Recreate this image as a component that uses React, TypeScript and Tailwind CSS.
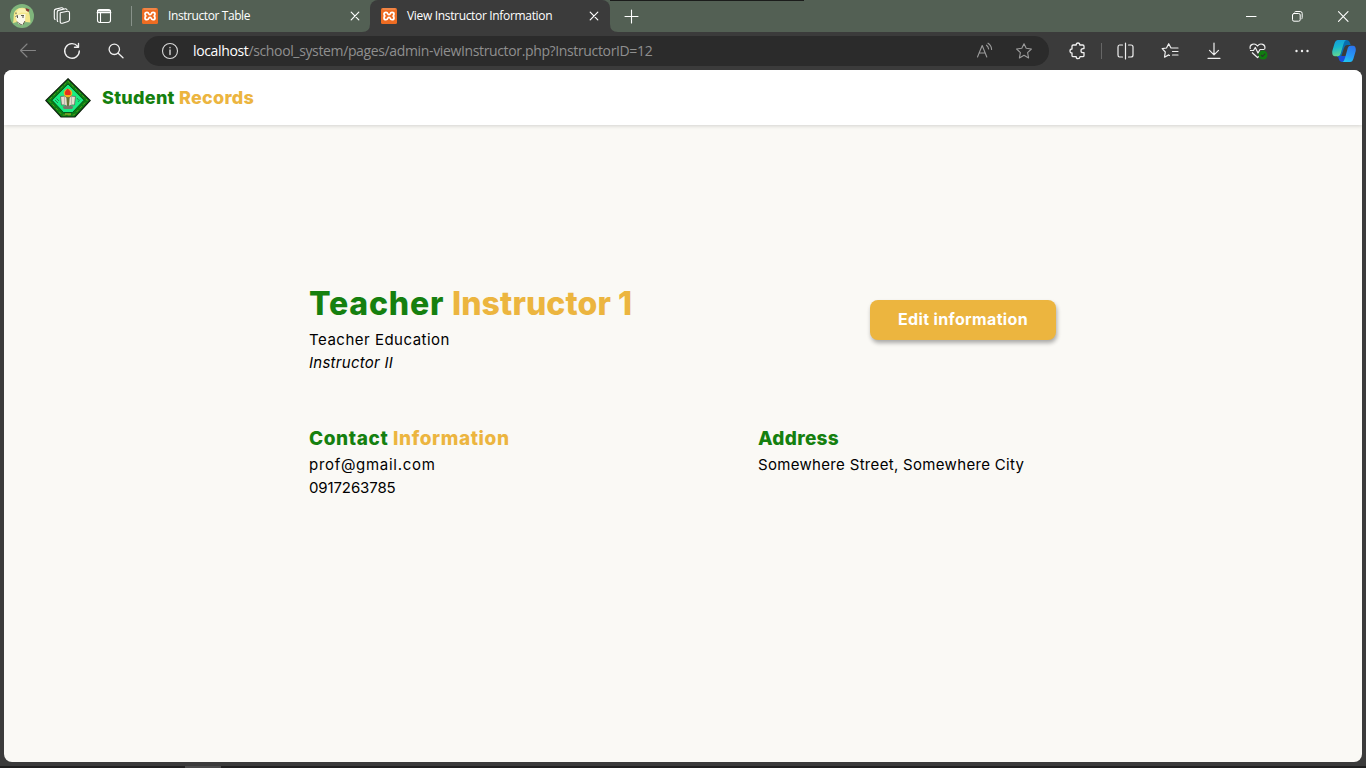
import type { ReactNode } from "react";

type IconProps = { children: ReactNode; size?: number; className?: string; width?: number };

function Icon({ children, size = 18, className = "", width = 1.1 }: IconProps) {
  return (
    <svg
      width={size}
      height={size}
      viewBox={`0 0 ${size} ${size}`}
      fill="none"
      stroke="currentColor"
      strokeWidth={width}
      strokeLinecap="round"
      strokeLinejoin="round"
      className={`shrink-0 ${className}`}
    >
      {children}
    </svg>
  );
}

function Cell({ className, children }: { className: string; children: ReactNode }) {
  return <div className={`flex shrink-0 items-center justify-center ${className}`}>{children}</div>;
}

function Avatar() {
  return (
    <svg width="24" height="24" viewBox="0 0 24 24">
      <circle cx="12" cy="12" r="12" fill="#7fb57c" />
      <path d="M3 19C4.500 13 2.500 9 6 6C9.500 2.700 16 3 18 6.500C20.500 11 20 15 20.500 18.500L15.500 18L12 20.500L7 18Z" fill="#f3e78a" />
      <path d="M5.500 11L15.500 10L15 17L12 21.500L8.500 20L6.500 16Z" fill="#faf8ea" />
      <path d="M6 9L9 4.500L16 5L18 9L11 8.500L7 10.500Z" fill="#f9f1b0" />
      <path d="M5.500 12.500L7.500 11.500V14M11 11.500H14M13 12V14M7 17.500L9 19.500L12 21M15 17L13 20.500M6 10V8.500" fill="none" stroke="#4d4b3c" strokeWidth=".9" />
      <path d="M15.500 4L19.500 5.500L18.500 8L16 6.500Z" fill="#8c3b35" />
    </svg>
  );
}

function Xampp() {
  return (
    <svg width="16" height="16" viewBox="0 0 16 16" className="shrink-0">
      <rect width="16" height="16" rx="1.500" fill="#ee6c22" />
      <path d="M1.500 1H14.500" stroke="#f5a574" strokeWidth=".9" />
      <path
        d="M8 6.700Q7 6.700 6.700 5.600Q6.400 4.300 5 4.300Q3 4.300 3 6.100Q3 7.300 3.900 8Q3 8.700 3 9.900Q3 11.700 5 11.700Q6.400 11.700 6.700 10.400Q7 9.300 8 9.300Q9 9.300 9.300 10.400Q9.600 11.700 11 11.700Q13 11.700 13 9.900Q13 8.700 12.100 8Q13 7.300 13 6.100Q13 4.300 11 4.300Q9.600 4.300 9.300 5.600Q9 6.700 8 6.700Z"
        fill="none"
        stroke="white"
        strokeWidth="1.700"
        strokeLinejoin="round"
      />
    </svg>
  );
}

function CloseMark() {
  return (
    <Icon size={10} width={1.2}>
      <path d="M1.200 1.200L8.800 8.800M8.800 1.200L1.200 8.800" />
    </Icon>
  );
}

function TabStrip() {
  return (
    <div className="flex h-8 shrink-0 items-center bg-[#536054] text-white">
      <Cell className="w-11"><Avatar /></Cell>
      <Cell className="w-9">
        <Icon>
          <path d="M7.200 5.800L14.500 4.300Q16.500 4 16.500 6V12.500Q16.500 14 15 14.500L9.500 16.200Q7.200 16.800 7.200 14.500Z" />
          <path d="M4.700 14.500Q4.200 14 4.200 12.500V5Q4.200 3.800 5.500 3.400L12.500 1.700Q13.700 1.600 14 2.800M2 12.500Q1.300 12 1.300 10.500V4Q1.300 2.500 2.700 2.100L8.500 .8Q9.800 .7 10.300 1.700" />
        </Icon>
      </Cell>
      <Cell className="w-12">
        <Icon size={16} width={1.1}>
          <rect x="1.500" y="1.500" width="13" height="13" rx="2.200" />
          <path d="M1.800 2.500H14M1.500 4.500H14.500" strokeWidth="1.700" />
          <path d="M4.500 5V14" />
        </Icon>
      </Cell>
      <div className="ml-[3px] h-5 w-px shrink-0 bg-[#88928a]" />
      <div className="flex h-8 w-[238px] shrink-0 items-center pl-[10px] pr-[10px]">
        <Xampp />
        <span className="ml-[10px] flex-1 whitespace-nowrap font-['Open_Sans',sans-serif] text-[12px] leading-4 tracking-[-0.41px]">Instructor Table</span>
        <CloseMark />
      </div>
      <div className="relative flex h-8 w-[240px] shrink-0 items-center rounded-t-lg bg-[#3b3b3b] pl-[11px] pr-[11px]">
        <svg width="256" height="8" viewBox="0 0 256 8" className="absolute -left-2 bottom-0" fill="#3b3b3b">
          <path d="M0 8Q8 8 8 0V8ZM256 8Q248 8 248 0V8Z" />
        </svg>
        <Xampp />
        <span className="ml-[10px] flex-1 whitespace-nowrap font-['Open_Sans',sans-serif] text-[12px] leading-4 tracking-[-0.33px]">View Instructor Information</span>
        <CloseMark />
      </div>
      <div className="flex h-8 w-[194px] shrink-0 flex-col border-t border-[#1b1c1b]">
        <Cell className="h-[30px] w-[43px]">
          <Icon size={15}><path d="M7.500 1V14M1 7.500H14" /></Icon>
        </Cell>
      </div>
      <div className="flex-1" />
      <Cell className="w-[46px]"><Icon size={11}><path d="M0 5.500H10" /></Icon></Cell>
      <Cell className="w-[46px]">
        <Icon size={11} width={1}>
          <rect x=".5" y="2.500" width="7.700" height="7.700" rx="1.500" />
          <path d="M2.700 1Q3.200 .5 4 .5H8.200Q10.200 .5 10.200 2.500V6.500Q10.200 7.500 9.600 8" />
        </Icon>
      </Cell>
      <Cell className="w-[46px]"><Icon size={11}><path d="M.5 .7L10 10.300M10 .7L.5 10.300" /></Icon></Cell>
    </div>
  );
}

function Copilot() {
  return (
    <svg width="24" height="24" viewBox="0 0 24 24">
      <defs>
        <linearGradient id="cpLeft" x1="0" y1="0" x2="0.2" y2="1">
          <stop offset="0" stopColor="#1499dc" />
          <stop offset=".5" stopColor="#18b9cd" />
          <stop offset="1" stopColor="#62d591" />
        </linearGradient>
        <linearGradient id="cpRight" x1="0.6" y1="0" x2="0.3" y2="1">
          <stop offset="0" stopColor="#2b75ee" />
          <stop offset=".6" stopColor="#269af6" />
          <stop offset="1" stopColor="#1fc4ee" />
        </linearGradient>
      </defs>
      <path d="M7 1H14.500Q17 1 18 4L18.700 6H15Q13 6 12 9L9 18H5Z" fill="#086eaf" />
      <path d="M6 17H14L16 14L13 23H9.500Q7.500 23 6.800 20Z" fill="#194dda" />
      <path d="M6 1H14Q12.500 1.500 11.500 5L8.500 15Q7.700 17.300 5.500 17.300H3Q-.3 17.300 .3 12L2.500 4.500Q3.500 1 6 1Z" fill="url(#cpLeft)" />
      <path d="M18 23H10.500Q12 22.500 13 19L15.800 9Q16.500 6.700 18.700 6.700H21Q24.300 6.700 23.700 12L21.500 19.500Q20.500 23 18 23Z" fill="url(#cpRight)" />
    </svg>
  );
}

const STAR = "M9 1.700L11.200 6.300L16.400 7L12.600 10.600L13.600 15.900L9 13.300L4.400 15.900L5.400 10.600L1.600 7L6.800 6.300Z";

function Toolbar() {
  return (
    <div className="flex h-[38px] shrink-0 items-center bg-[#3b3b3b] pl-1.5 text-[#f0f0f0]">
      <Cell className="w-11 text-[#858585]"><Icon><path d="M8 2L1.500 8.500L8 15M1.500 8.500H16.500" /></Icon></Cell>
      <Cell className="w-11">
        <Icon width={1.4}><path d="M14.700 4.400A7.300 7.300 0 1 0 16.300 9M15.500 1.500V5.300H11.500" /></Icon>
      </Cell>
      <Cell className="w-11"><Icon width={1.3}><circle cx="7.300" cy="7.300" r="5.200" /><path d="M11.200 11.200L16 15.700" /></Icon></Cell>
      <div className="ml-1.5 flex h-[30px] w-[905px] shrink-0 items-center rounded-full bg-[#2b2b2b] pl-[17px]">
        <Icon className="text-[#d8d8d8]">
          <circle cx="9" cy="9" r="7.500" />
          <path d="M9 8V12.500M9 5.500V5.700" strokeWidth="1.400" />
        </Icon>
        <span className="ml-[14px] flex-1 whitespace-nowrap font-['Open_Sans',sans-serif] text-[14px] leading-5 tracking-[-0.36px] text-[#8f8f8f]">
          <span className="text-white">localhost</span>/school_system/pages/admin-viewInstructor.php?InstructorID=12
        </span>
        <Cell className="w-[38px] text-[#9b9b9b]">
          <Icon><path d="M1.500 15L6.200 3.500L10.800 15M3 11H9.300M10.500 3.200Q12.300 4.500 12.600 7M12 1.200Q15.500 3.500 15.600 7.500" /></Icon>
        </Cell>
        <Cell className="mr-[5px] w-10 text-[#9b9b9b]"><Icon><path d={STAR} /></Icon></Cell>
      </div>
      <Cell className="ml-[7px] w-11">
        <Icon width={1.3}>
          <path d="M4.200 3H7.200Q7.200 1 9 1Q10.800 1 10.800 3H13.800Q15 3 15 4.200V6.600H14Q12 6.700 12 8.700Q12 10.700 14 10.700H15V13.500Q15 14.700 13.800 14.700H11Q10.800 16.700 9 16.700Q7.200 16.700 7.200 14.700H4.200Q3 14.700 3 13.500V11Q1 11 1 9Q1 7 3 7V4.200Q3 3 4.200 3Z" />
        </Icon>
      </Cell>
      <div className="ml-px h-4 w-px shrink-0 bg-[#666666]" />
      <Cell className="w-[46px]">
        <Icon width={1.2}>
          <path d="M9.500 1V17M6.500 3H3.500Q2 3 2 5V13Q2 15 3.500 15H6.500M12.500 3H15Q17 3 17 5V13Q17 15 15 15H12.500" />
        </Icon>
      </Cell>
      <Cell className="w-11">
        <Icon width={1.2}>
          <path d="M11.500 6H10L7.700 1.700L5.500 6L1.200 6.700L4.300 10L3.500 15.200L7.700 12.900L8.500 13.400M11.500 6H17M11.500 9.500H17M11.500 13H17" />
        </Icon>
      </Cell>
      <Cell className="w-11"><Icon width={1.2}><path d="M9 1V12.500M4.500 8.300L9 12.800L13.500 8.300M3 16.300H15" /></Icon></Cell>
      <Cell className="w-11">
        <svg width="20" height="18" viewBox="0 0 20 18" fill="none" stroke="currentColor" strokeWidth="1.200" strokeLinejoin="round">
          <path d="M2.300 7C1 2.500 6.500 .2 9.500 4C12.500 .2 18 2.500 16.700 7M4 10.500L9.500 15.500L11 14.200" />
          <path d="M2 8.500H5.500L7.300 5.500L10 11L12 7.500H16.500" />
          <circle cx="15" cy="13" r="4.500" fill="#107c10" stroke="none" />
          <path d="M13 13L14.500 14.500L17.200 11.700" stroke="#273c27" strokeWidth="1.100" />
        </svg>
      </Cell>
      <Cell className="w-11">
        <Icon><g fill="currentColor" stroke="none"><circle cx="3.500" cy="9" r="1.200" /><circle cx="9" cy="9" r="1.200" /><circle cx="14.500" cy="9" r="1.200" /></g></Icon>
      </Cell>
      <Cell className="w-10"><Copilot /></Cell>
    </div>
  );
}

function SchoolLogo() {
  return (
    <svg width="46" height="40" viewBox="0 0 46 40" className="shrink-0">
      <path d="M23 .8L45.200 22.500L30 39H16L.8 22.500Z" fill="#087f12" stroke="#10200f" strokeWidth="1.200" />
      <path d="M23 3.300L42.200 22.300L28.800 37H17.200L3.800 22.300Z" fill="none" stroke="#8f9d22" strokeWidth=".7" strokeDasharray="3 2" />
      <path d="M23 6L39 22.200L27.500 34.500H18.500L7 22.200Z" fill="#18ed82" stroke="#083b12" strokeWidth=".8" />
      <path d="M15.500 18.500Q20 17 23 20Q26 17 30.500 18.500L29.500 27Q26 26 23 29Q20 26 16.500 27Z" fill="#e5ddcc" stroke="#62655a" strokeWidth=".8" />
      <path d="M19.500 19V26M26.500 19V26" stroke="#b7b5ac" strokeWidth="1" />
      <path d="M21.300 19H24.700L23.800 30H22.200Z" fill="#667238" />
      <path d="M17.500 28.500Q23 27 28.500 28.500L27 31H19Z" fill="#77766a" />
      <circle cx="23" cy="15" r="4.300" fill="#f2ae1b" />
      <path d="M20.500 17C18.500 13 22 13 22 10.500C25 12 26.500 14 25.500 17Z" fill="#e62f1e" />
      <path d="M10 22L13 25M11.500 20.500L14 23M33 24L35 21.500M32 20L33.500 22" stroke="#276c44" strokeWidth=".8" />
      <path d="M20 36H26" stroke="#c4b535" strokeWidth="1" />
    </svg>
  );
}

function Header() {
  return (
    <header className="relative flex h-[55px] shrink-0 items-center bg-white pl-[41px] shadow-[0_1px_4px_rgba(0,0,0,0.16)]">
      <SchoolLogo />
      <span className="ml-[11px] whitespace-nowrap text-[18px] font-extrabold leading-6 tracking-[0.28px] text-[#15800f]">
        Student <span className="text-[#ecb53f]">Records</span>
      </span>
    </header>
  );
}

function Profile() {
  return (
    <main className="flex flex-1 flex-col pl-[305px] pt-[157px] text-black">
      <div className="flex">
        <section className="w-[561px]">
          <h1 className="whitespace-nowrap text-[32px] font-extrabold leading-[44px] tracking-[0.8px] text-[#15800f]">
            Teacher <span className="tracking-[0.1px] text-[#ecb53f]">Instructor 1</span>
          </h1>
          <p className="mt-[2px] text-[15px] leading-[23px] tracking-[0.5px]">Teacher Education</p>
          <p className="text-[15px] italic leading-[23px] tracking-[0.27px]">Instructor II</p>
        </section>
        <button className="mt-[18px] h-10 w-[186px] rounded-lg bg-[#ecb53f] pb-[2px] text-[16px] font-bold leading-6 tracking-[0.35px] text-white shadow-[1px_3px_4px_rgba(0,0,0,0.32)]">
          Edit information
        </button>
      </div>
      <div className="mt-[51px] flex">
        <section className="w-[449px]">
          <h2 className="whitespace-nowrap text-[19px] font-extrabold leading-7 tracking-[0.6px] text-[#15800f]">
            Contact <span className="text-[#ecb53f]">Information</span>
          </h2>
          <p className="text-[15px] leading-[23px] tracking-[0.7px]">prof@gmail.com</p>
          <p className="text-[15px] leading-[23px] tracking-[-0.12px]">0917263785</p>
        </section>
        <section>
          <h2 className="text-[19px] font-extrabold leading-7 tracking-[0.3px] text-[#15800f]">Address</h2>
          <p className="whitespace-nowrap text-[15px] leading-[23px] tracking-[0.32px]">Somewhere Street, Somewhere City</p>
        </section>
      </div>
    </main>
  );
}

export default function App() {
  return (
    <div className="flex h-screen w-screen flex-col overflow-hidden bg-[#3b3b3b]">
      <TabStrip />
      <Toolbar />
      <div className="mx-1 flex h-[692px] shrink-0 flex-col overflow-hidden rounded-lg bg-[#faf9f5] font-['Inter',sans-serif]">
        <Header />
        <Profile />
      </div>
      <div className="mt-1 flex h-0.5 shrink-0 bg-[#202020] pl-[185px]">
        <div className="w-9 bg-[#4b4b4b]" />
      </div>
    </div>
  );
}
